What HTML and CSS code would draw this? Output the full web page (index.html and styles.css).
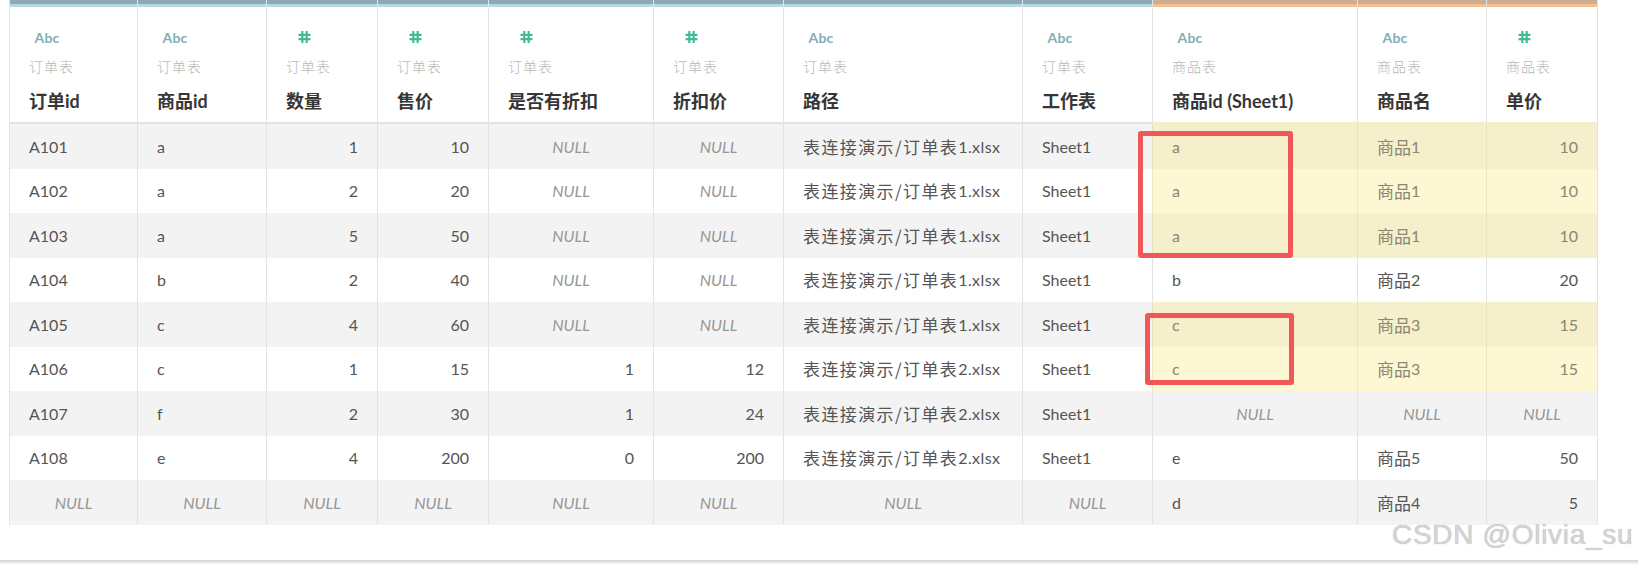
FILE: index.html
```html
<!DOCTYPE html>
<html lang="zh">
<head>
<meta charset="utf-8">
<title>表连接</title>
<link rel="stylesheet" href="styles.css">
</head>
<body>
<div class="page">
  <div class="grid">
    <div class="row head">
      <div class="hcell"><div class="icon"><span class="abc">Abc</span></div><div class="src">订单表</div><div class="name">订单id</div></div>
      <div class="hcell"><div class="icon"><span class="abc">Abc</span></div><div class="src">订单表</div><div class="name">商品id</div></div>
      <div class="hcell"><div class="icon"><svg class="hash" viewBox="0 0 12 12"><path d="M4 0.5V11.5M8 0.5V11.5M0.5 4H11.5M0.5 8H11.5"/></svg></div><div class="src">订单表</div><div class="name">数量</div></div>
      <div class="hcell"><div class="icon"><svg class="hash" viewBox="0 0 12 12"><path d="M4 0.5V11.5M8 0.5V11.5M0.5 4H11.5M0.5 8H11.5"/></svg></div><div class="src">订单表</div><div class="name">售价</div></div>
      <div class="hcell"><div class="icon"><svg class="hash" viewBox="0 0 12 12"><path d="M4 0.5V11.5M8 0.5V11.5M0.5 4H11.5M0.5 8H11.5"/></svg></div><div class="src">订单表</div><div class="name">是否有折扣</div></div>
      <div class="hcell"><div class="icon"><svg class="hash" viewBox="0 0 12 12"><path d="M4 0.5V11.5M8 0.5V11.5M0.5 4H11.5M0.5 8H11.5"/></svg></div><div class="src">订单表</div><div class="name">折扣价</div></div>
      <div class="hcell"><div class="icon"><span class="abc">Abc</span></div><div class="src">订单表</div><div class="name">路径</div></div>
      <div class="hcell"><div class="icon"><span class="abc">Abc</span></div><div class="src">订单表</div><div class="name">工作表</div></div>
      <div class="hcell prod"><div class="icon"><span class="abc">Abc</span></div><div class="src">商品表</div><div class="name">商品id (Sheet1)</div></div>
      <div class="hcell prod"><div class="icon"><span class="abc">Abc</span></div><div class="src">商品表</div><div class="name">商品名</div></div>
      <div class="hcell prod last"><div class="icon"><svg class="hash" viewBox="0 0 12 12"><path d="M4 0.5V11.5M8 0.5V11.5M0.5 4H11.5M0.5 8H11.5"/></svg></div><div class="src">商品表</div><div class="name">单价</div></div>
    </div>

    <div class="row odd">
      <div class="cell">A101</div><div class="cell">a</div><div class="cell num">1</div><div class="cell num">10</div><div class="cell null">NULL</div><div class="cell null">NULL</div><div class="cell path"><span class="zh">表连接演示/订单表</span>1.xlsx</div><div class="cell">Sheet1</div>
      <div class="cell hl">a</div><div class="cell hl"><span class="zh">商品</span>1</div><div class="cell hl num last">10</div>
    </div>
    <div class="row even">
      <div class="cell">A102</div><div class="cell">a</div><div class="cell num">2</div><div class="cell num">20</div><div class="cell null">NULL</div><div class="cell null">NULL</div><div class="cell path"><span class="zh">表连接演示/订单表</span>1.xlsx</div><div class="cell">Sheet1</div>
      <div class="cell hl">a</div><div class="cell hl"><span class="zh">商品</span>1</div><div class="cell hl num last">10</div>
    </div>
    <div class="row odd">
      <div class="cell">A103</div><div class="cell">a</div><div class="cell num">5</div><div class="cell num">50</div><div class="cell null">NULL</div><div class="cell null">NULL</div><div class="cell path"><span class="zh">表连接演示/订单表</span>1.xlsx</div><div class="cell">Sheet1</div>
      <div class="cell hl">a</div><div class="cell hl"><span class="zh">商品</span>1</div><div class="cell hl num last">10</div>
    </div>
    <div class="row even">
      <div class="cell">A104</div><div class="cell">b</div><div class="cell num">2</div><div class="cell num">40</div><div class="cell null">NULL</div><div class="cell null">NULL</div><div class="cell path"><span class="zh">表连接演示/订单表</span>1.xlsx</div><div class="cell">Sheet1</div>
      <div class="cell">b</div><div class="cell"><span class="zh">商品</span>2</div><div class="cell num last">20</div>
    </div>
    <div class="row odd">
      <div class="cell">A105</div><div class="cell">c</div><div class="cell num">4</div><div class="cell num">60</div><div class="cell null">NULL</div><div class="cell null">NULL</div><div class="cell path"><span class="zh">表连接演示/订单表</span>1.xlsx</div><div class="cell">Sheet1</div>
      <div class="cell hl">c</div><div class="cell hl"><span class="zh">商品</span>3</div><div class="cell hl num last">15</div>
    </div>
    <div class="row even">
      <div class="cell">A106</div><div class="cell">c</div><div class="cell num">1</div><div class="cell num">15</div><div class="cell num">1</div><div class="cell num">12</div><div class="cell path"><span class="zh">表连接演示/订单表</span>2.xlsx</div><div class="cell">Sheet1</div>
      <div class="cell hl">c</div><div class="cell hl"><span class="zh">商品</span>3</div><div class="cell hl num last">15</div>
    </div>
    <div class="row odd">
      <div class="cell">A107</div><div class="cell">f</div><div class="cell num">2</div><div class="cell num">30</div><div class="cell num">1</div><div class="cell num">24</div><div class="cell path"><span class="zh">表连接演示/订单表</span>2.xlsx</div><div class="cell">Sheet1</div>
      <div class="cell null">NULL</div><div class="cell null">NULL</div><div class="cell null last">NULL</div>
    </div>
    <div class="row even">
      <div class="cell">A108</div><div class="cell">e</div><div class="cell num">4</div><div class="cell num">200</div><div class="cell num">0</div><div class="cell num">200</div><div class="cell path"><span class="zh">表连接演示/订单表</span>2.xlsx</div><div class="cell">Sheet1</div>
      <div class="cell">e</div><div class="cell"><span class="zh">商品</span>5</div><div class="cell num last">50</div>
    </div>
    <div class="row odd">
      <div class="cell null">NULL</div><div class="cell null">NULL</div><div class="cell null">NULL</div><div class="cell null">NULL</div><div class="cell null">NULL</div><div class="cell null">NULL</div><div class="cell null">NULL</div><div class="cell null">NULL</div>
      <div class="cell">d</div><div class="cell"><span class="zh">商品</span>4</div><div class="cell num last">5</div>
    </div>
  </div>

  <div class="bottom-line"></div>

  <div class="mark mark-a"></div>
  <div class="mark mark-b"></div>
  <div class="watermark">CSDN @Olivia_su</div>
</div>
</body>
</html>
```

FILE: styles.css
```css
html, body {
  margin: 0;
  padding: 0;
  background: #ffffff;
}

.page {
  position: relative;
  width: 1638px;
  height: 564px;
  overflow: hidden;
  padding-left: 9px;
  box-sizing: border-box;
  font-family: Lato, "Noto Sans CJK SC", sans-serif;
  color: #555555;
}

.grid {
  width: 1589px;
}

.row {
  display: grid;
  grid-template-columns: 128px 129px 111px 111px 165px 130px 239px 130px 205px 129px 112px;
}

/* ---------- header ---------- */
.head {
  height: 124px;
}

.hcell {
  box-sizing: border-box;
  border-left: 1px solid #e3e3e3;
  border-bottom: 2px solid #e2e2e2;
  background: linear-gradient(#8ea8b5 0 4px, #b2d9e5 4px 7px, #ffffff 7px);
  padding: 27px 10px 0 19px;
  display: flex;
  flex-direction: column;
}

.hcell.prod {
  background: linear-gradient(#cfac95 0 4px, #f2c08c 4px 7px, #ffffff 7px);
  border-bottom-color: #f6eecb;
}

.hcell.last {
  border-right: 1px solid #e3e3e3;
}

.icon {
  width: 36px;
  height: 20px;
  display: flex;
  align-items: center;
  justify-content: center;
}

.abc {
  font-family: Lato, sans-serif;
  font-weight: 700;
  font-size: 14px;
  color: #80aeb5;
  letter-spacing: 0.2px;
}

.hash {
  width: 13px;
  height: 14px;
  fill: none;
  stroke: #3fbb98;
  stroke-width: 2;
}

.src {
  margin-top: 9px;
  height: 20px;
  line-height: 20px;
  font-family: "Noto Sans CJK SC", sans-serif;
  font-size: 14px;
  letter-spacing: 1px;
  color: #b8b8b8;
  font-weight: 300;
}

.name {
  margin-top: 13px;
  height: 24px;
  line-height: 24px;
  font-family: Lato, "Noto Sans CJK SC", sans-serif;
  font-size: 18px;
  font-weight: 700;
  color: #363636;
  white-space: nowrap;
}

/* ---------- body ---------- */
.odd, .even {
  height: 44.5px;
}

.odd { background: #f3f3f3; }
.even { background: #ffffff; }

.cell {
  box-sizing: border-box;
  border-left: 1px solid #e3e3e3;
  padding: 0 19px;
  display: flex;
  align-items: center;
  font-size: 16px;
  white-space: nowrap;
  color: #555555;
}

.cell.last {
  border-right: 1px solid #e3e3e3;
}

.zh {
  font-family: "Noto Sans CJK SC", sans-serif;
  font-size: 17px;
}

.path .zh {
  letter-spacing: 1.4px;
}

.path {
  letter-spacing: 0.4px;
}

.num {
  justify-content: flex-end;
}

.null {
  justify-content: center;
  font-style: italic;
  color: #979797;
}

.odd .hl {
  background: #f6efcb;
  border-left-color: #ebe3c0;
  color: #8c8672;
}

.even .hl {
  background: #fdf7d3;
  border-left-color: #efe6c2;
  color: #8c8672;
}

.hl.last {
  border-right-color: #ede4c0;
}

.bottom-line {
  margin-left: -9px;
  margin-top: 35px;
  width: 1638px;
  height: 2px;
  background: #d9d9d9;
  border-bottom: 2px solid #efefef;
}

/* ---------- overlays ---------- */
.mark {
  position: absolute;
  border: 5px solid #f25757;
  border-radius: 3px;
  box-sizing: border-box;
}

.mark-a {
  left: 1138px;
  top: 131px;
  width: 155px;
  height: 127px;
}

.mark-b {
  left: 1145px;
  top: 313px;
  width: 149px;
  height: 72px;
}

.watermark {
  position: absolute;
  left: 1392px;
  top: 518px;
  font-family: "Liberation Sans", Arial, sans-serif;
  font-size: 28px;
  line-height: 34px;
  letter-spacing: 0.7px;
  color: #d4d4d4;
  text-shadow: 0 0 1px #a8a8a8;
  white-space: nowrap;
}
```
